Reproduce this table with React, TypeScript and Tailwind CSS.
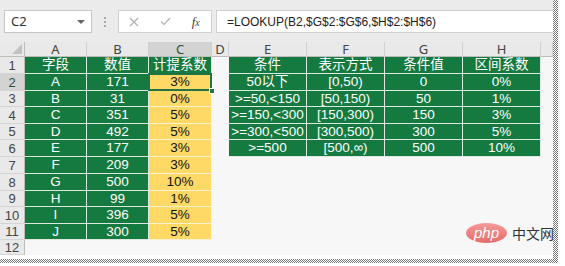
import React from "react";

const FONT = "font-['Liberation_Sans','Noto_Sans_CJK_SC',sans-serif]";
const UI = "font-['Noto_Sans','Liberation_Sans',sans-serif]";

const CHECKER =
  "bg-[repeating-conic-gradient(#7a7a7a_0_25%,#ffffff_0_50%)] bg-[length:2px_2px]";

const left: [string, string, string][] = [
  ["字段", "数值", "计提系数"],
  ["A", "171", "3%"],
  ["B", "31", "0%"],
  ["C", "351", "5%"],
  ["D", "492", "5%"],
  ["E", "177", "3%"],
  ["F", "209", "3%"],
  ["G", "500", "10%"],
  ["H", "99", "1%"],
  ["I", "396", "5%"],
  ["J", "300", "5%"],
];

const right: [string, string, string, string][] = [
  ["条件", "表示方式", "条件值", "区间系数"],
  ["50以下", "[0,50)", "0", "0%"],
  [">=50,<150", "[50,150)", "50", "1%"],
  [">=150,<300", "[150,300)", "150", "3%"],
  [">=300,<500", "[300,500)", "300", "5%"],
  [">=500", "[500,∞)", "500", "10%"],
];

const GREEN =
  "bg-[#157a40] text-white border-r border-b border-[#dde8e0] flex items-center justify-center whitespace-nowrap";
const YELLOW =
  "bg-[#fed966] text-[#111] border-r border-b border-[#fff3cf] flex items-center justify-center whitespace-nowrap";

function ColHeader({ label, selected }: { label: string; selected?: boolean }) {
  return (
    <div
      className={`${UI} text-[13px] leading-[13px] flex items-center justify-center border-r border-b border-r-[#d0d0d0] border-b-[#bdbdbd] ${
        selected ? "bg-[#d3d3d3] text-[#2f4f3a]" : "bg-[#e9e9e9] text-[#444]"
      }`}
    >
      {label}
    </div>
  );
}

function RowHeader({ label, selected }: { label: string; selected?: boolean }) {
  return (
    <div
      className={`${FONT} text-[13px] leading-[13px] flex items-center justify-center border-r border-b border-r-[#bdbdbd] border-b-[#d4d4d4] ${
        selected ? "bg-[#d3d3d3] text-[#2f4f3a]" : "bg-[#e9e9e9] text-[#444]"
      }`}
    >
      <span className="leading-[13px]">{label}</span>
    </div>
  );
}

export default function App() {
  const cells: React.ReactNode[] = [];
  cells.push(
    <div
      key="corner"
      className="bg-[#e9e9e9] border-r border-b border-r-[#bdbdbd] border-b-[#bdbdbd] flex items-end justify-end p-[2px]"
    >
      <div className="w-0 h-0 border-l-[10px] border-l-transparent border-b-[10px] border-b-[#c2c2c2]" />
    </div>
  );
  ["A", "B", "C", "D", "E", "F", "G", "H", ""].forEach((l) =>
    cells.push(<ColHeader key={"h" + l} label={l} selected={l === "C"} />)
  );

  for (let r = 0; r < 12; r++) {
    cells.push(<RowHeader key={"r" + r} label={String(r + 1)} selected={r === 1} />);
    const L = left[r];
    if (L) {
      cells.push(
        <div key={`a${r}`} className={GREEN}>
          {L[0]}
        </div>
      );
      cells.push(
        <div key={`b${r}`} className={GREEN}>
          {L[1]}
        </div>
      );
      if (r === 0) {
        cells.push(
          <div key={`c${r}`} className={GREEN}>
            {L[2]}
          </div>
        );
      } else if (r === 1) {
        cells.push(
          <div key={`c${r}`} className={`${YELLOW} relative`}>
            {L[2]}
            <div className="absolute left-[-1px] top-[-1px] right-[-1px] bottom-[-1px] border-2 border-[#217346]" />
            <div className="absolute right-[-4px] bottom-[-4px] w-[6px] h-[6px] bg-[#217346] border border-white" />
          </div>
        );
      } else {
        cells.push(
          <div key={`c${r}`} className={YELLOW}>
            {L[2]}
          </div>
        );
      }
    } else {
      cells.push(<div key={`a${r}`} />, <div key={`b${r}`} />, <div key={`c${r}`} />);
    }
    cells.push(<div key={`d${r}`} />);
    const R = right[r];
    if (R) {
      R.forEach((v, i) =>
        cells.push(
          <div key={`e${r}${i}`} className={GREEN}>
            {v}
          </div>
        )
      );
    } else {
      cells.push(
        <div key={`e${r}0`} />,
        <div key={`e${r}1`} />,
        <div key={`e${r}2`} />,
        <div key={`e${r}3`} />
      );
    }
    cells.push(<div key={`z${r}`} />);
  }

  return (
    <div className="w-[565px] h-[266px] bg-white relative overflow-hidden">
      <div className="flex">
        <div className="w-[553px] h-[255px] bg-[#f7f7f7] flex flex-col">
          {/* toolbar */}
          <div className="h-[42px] bg-[#ebebeb] flex items-start pt-[10px] pl-[4px]">
            <div className="w-[88px] h-[23px] bg-white border border-[#c6c6c6] flex items-center justify-between pl-[6px] pr-[6px]">
              <span className={`${UI} text-[13px] text-[#333]`}>C2</span>
              <div className="w-0 h-0 border-l-[4px] border-r-[4px] border-t-[4px] border-l-transparent border-r-transparent border-t-[#666]" />
            </div>
            <div className="w-[26px] h-[23px] flex flex-col items-center justify-center gap-[2px]">
              <div className="w-[2px] h-[2px] bg-[#a8a8a8]" />
              <div className="w-[2px] h-[2px] bg-[#a8a8a8]" />
              <div className="w-[2px] h-[2px] bg-[#a8a8a8]" />
            </div>
            <div className="w-[94px] h-[23px] bg-white border border-[#d0d0d0] flex items-center">
              <div className="w-[31px] flex justify-center">
                <svg width="10" height="10" viewBox="0 0 10 10">
                  <path d="M1 1L9 9M9 1L1 9" stroke="#b0b0b0" strokeWidth="1.2" />
                </svg>
              </div>
              <div className="w-[31px] flex justify-center">
                <svg width="11" height="9" viewBox="0 0 11 9">
                  <path d="M1 4.5L4 7.5L10 1" stroke="#b0b0b0" strokeWidth="1.2" fill="none" />
                </svg>
              </div>
              <div className="w-[31px] flex justify-center">
                <span className="font-['Liberation_Serif',serif] italic text-[13px] text-[#444] leading-none">
                  f<span className="text-[10px]">x</span>
                </span>
              </div>
            </div>
            <div className="ml-[4px] flex-1 h-[23px] bg-white border border-[#d0d0d0] border-r-0 flex items-center pl-[10px]">
              <span className={`${FONT} text-[12px] text-[#222]`}>
                =LOOKUP(B2,$G$2:$G$6,$H$2:$H$6)
              </span>
            </div>
          </div>
          {/* grid */}
          <div
            className={`grid grid-cols-[25px_62px_62px_63px_17px_78px_78px_78px_78px_12px] grid-rows-[15px_17px_17px_16px_17px_16px_17px_17px_17px_16px_17px_16px_15px] ${FONT} text-[13.5px] leading-none`}
          >
            {cells}
          </div>
        </div>
        <div className={`w-[5px] h-[259px] ${CHECKER}`} />
      </div>
      <div className={`w-[558px] h-[4px] ${CHECKER}`} />

      {/* watermark */}
      <div className="absolute left-[466px] top-[223px] flex items-center gap-[5px]">
        <div className="w-[41px] h-[20px] rounded-[50%] bg-[linear-gradient(180deg,#f39a9a,#e86a6a)] flex items-center justify-center">
          <span className="font-['Liberation_Sans',sans-serif] italic text-white text-[15px] leading-none -mt-[2px]">
            php
          </span>
        </div>
        <span className="font-['Noto_Sans_CJK_SC',sans-serif] text-[14px] text-[#333] leading-none">
          中文网
        </span>
      </div>
    </div>
  );
}
